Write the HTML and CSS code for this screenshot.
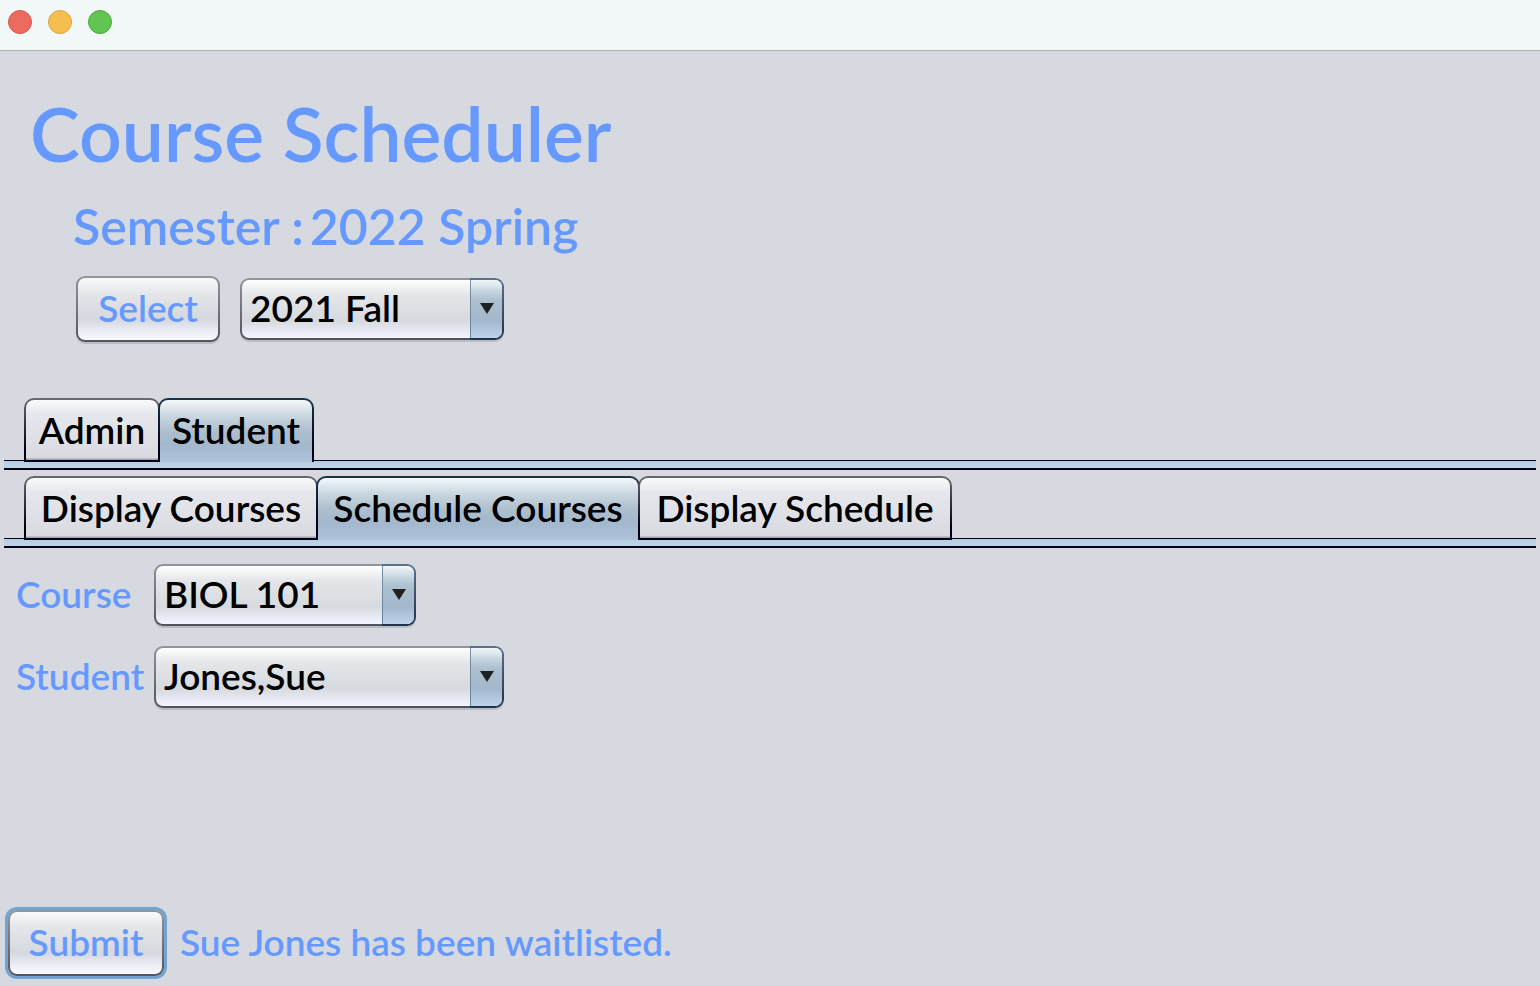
FILE: index.html
```html
<!DOCTYPE html>
<html lang="en">
<head>
<meta charset="utf-8">
<title>Course Scheduler</title>
<link rel="stylesheet" href="styles.css">
</head>
<body>
<div class="window">
  <header class="titlebar">
    <button class="light light-close" type="button" aria-label="Close"></button>
    <button class="light light-minimize" type="button" aria-label="Minimize"></button>
    <button class="light light-zoom" type="button" aria-label="Zoom"></button>
  </header>
  <section class="heading">
    <h1 class="title">Course Scheduler</h1>
    <h2 class="semester"><span>Semester :</span><span>2022 Spring</span></h2>
    <div class="semester-picker">
      <button class="button button-select" type="button">Select</button>
      <div class="combo combo-semester">
        <select class="combo-field" aria-label="Semester"><option>2021 Fall</option></select>
        <svg class="combo-arrow" width="14" height="11" viewBox="0 0 14 11" aria-hidden="true"><path d="M0 0H14L7 11Z" fill="#1e2022"/></svg>
      </div>
    </div>
  </section>
  <main class="content">
    <nav class="tabs" role="tablist" aria-label="Role">
      <button class="tab tab-admin" type="button" role="tab" aria-selected="false">Admin</button>
      <button class="tab tab-student" type="button" role="tab" aria-selected="true">Student</button>
    </nav>
    <div class="band"></div>
    <nav class="tabs tabs-inner" role="tablist" aria-label="Student pages">
      <button class="tab tab-courses" type="button" role="tab" aria-selected="false">Display Courses</button>
      <button class="tab tab-schedule" type="button" role="tab" aria-selected="true">Schedule Courses</button>
      <button class="tab tab-display" type="button" role="tab" aria-selected="false">Display Schedule</button>
    </nav>
    <div class="band"></div>
    <form class="form">
      <div class="fields">
        <label class="label" for="course">Course</label>
        <div class="combo combo-course">
          <select class="combo-field" id="course"><option>BIOL 101</option></select>
          <svg class="combo-arrow" width="14" height="11" viewBox="0 0 14 11" aria-hidden="true"><path d="M0 0H14L7 11Z" fill="#1e2022"/></svg>
        </div>
        <label class="label" for="student">Student</label>
        <div class="combo combo-student">
          <select class="combo-field" id="student"><option>Jones,Sue</option></select>
          <svg class="combo-arrow" width="14" height="11" viewBox="0 0 14 11" aria-hidden="true"><path d="M0 0H14L7 11Z" fill="#1e2022"/></svg>
        </div>
      </div>
      <div class="actions">
        <button class="button button-submit" type="button">Submit</button>
        <output class="status">Sue Jones has been waitlisted.</output>
      </div>
    </form>
  </main>
</div>
</body>
</html>
```

FILE: styles.css
```css
* {
  box-sizing: border-box;
}

body {
  margin: 0;
  background: #d6d9e0;
  color: #000;
  font: 600 37px/44px Futura, Lato, "Liberation Sans", sans-serif;
}

button,
select {
  margin: 0;
  font: inherit;
}

.window {
  display: flex;
  flex-direction: column;
  min-height: 100vh;
}

.titlebar {
  display: flex;
  gap: 16px;
  height: 51px;
  padding: 10px 8px;
  border-bottom: 1px solid #adafb8;
  background: #f3f9f9;
}

.light {
  width: 24px;
  height: 24px;
  padding: 0;
  border: 1px solid;
  border-radius: 50%;
}

.light-close {
  border-color: #d9564b;
  background: #ec6a5e;
}

.light-minimize {
  border-color: #d9a241;
  background: #f4bf4f;
}

.light-zoom {
  border-color: #4aa73c;
  background: #61c554;
}

.heading {
  padding: 37px 30px 0;
  color: #69f;
}

.title {
  margin: 0;
  font-size: 75px;
  font-weight: 600;
  line-height: 90px;
}

.semester {
  display: flex;
  gap: 6px;
  margin: 18px 0 0;
  padding-left: 43px;
  font-size: 50px;
  font-weight: 600;
  line-height: 60px;
}

.semester-picker {
  display: flex;
  align-items: center;
  gap: 20px;
  padding: 20px 0 0 46px;
}

.button {
  height: 66px;
  padding: 0 0 2px;
  border: 2px solid transparent;
  border-radius: 9px;
  background:
    linear-gradient(#f8fafa, #e5e6e9 25%, #d6d9df 62%, #d6d9df 68%, #e7eaf3 82%, #fafbff) padding-box,
    linear-gradient(#92969b, #52555d) border-box;
  box-shadow: 0 2px 0 #b9bcc3;
  color: #69f;
}

.button-select {
  width: 144px;
}

.button-submit {
  width: 156px;
  box-shadow: 0 0 0 3px #73a4d1;
}

.combo {
  position: relative;
}

.combo-semester {
  width: 264px;
}

.combo-course {
  width: 262px;
}

.combo-student {
  width: 350px;
}

.combo-field {
  appearance: none;
  display: block;
  width: 100%;
  height: 62px;
  padding: 0 40px 2px 8px;
  border: 2px solid transparent;
  border-radius: 9px;
  background:
    linear-gradient(#7890a5, #65839e) right 31px top / 1px 100% no-repeat padding-box,
    linear-gradient(#f3f7fa, #c4d4de 20%, #aec0cf 35%, #a3b8cc 70%, #bdd3ea) right top / 32px 100% no-repeat padding-box,
    linear-gradient(#fff, #e5e6e9 25%, #d6d9df 70%, #f3f5ff) padding-box,
    linear-gradient(#5b7289, #1d3249) right top / 34px 100% no-repeat border-box,
    linear-gradient(#92949d, #50535d) border-box;
  box-shadow: 0 2px 0 #b9bcc3;
  color: #000;
}

.combo-arrow {
  position: absolute;
  top: 25px;
  right: 10px;
  pointer-events: none;
}

.content {
  display: flex;
  flex: 1;
  flex-direction: column;
  padding-top: 56px;
}

.tabs {
  position: relative;
  z-index: 1;
  display: flex;
  margin-bottom: -2px;
  padding-left: 24px;
}

.tabs-inner {
  margin-top: 6px;
}

.tab {
  height: 64px;
  padding: 0;
  border: 2px solid transparent;
  border-radius: 10px 10px 0 0;
  background:
    linear-gradient(#fafbfc, #e7e8ed 22%, #d8dae1 97%, #a1a3ad 98%) padding-box,
    linear-gradient(#686a72, #000014 80%) border-box;
  color: #000;
}

.tab + .tab {
  margin-left: -2px;
}

.tab[aria-selected="true"] {
  padding-bottom: 2px;
  border-bottom: 0;
  background:
    linear-gradient(#f5f8fa, #cbd8e1 24%, #aebfce 50%, #a3b8cd 72%, #adc3da) padding-box,
    linear-gradient(#1e3448, #000014 80%) border-box;
}

.tab-admin {
  width: 136px;
}

.tab-student {
  width: 156px;
}

.tab-courses {
  width: 294px;
}

.tab-schedule {
  width: 324px;
}

.tab-display {
  width: 314px;
}

.band {
  height: 10px;
  margin: 0 4px;
  border-top: 1px solid #000014;
  border-bottom: 2px solid #000014;
  background: linear-gradient(#b8cce3, #bdd6e8);
}

.form {
  display: flex;
  flex: 1;
  flex-direction: column;
  justify-content: space-between;
  padding: 16px 8px 10px;
}

.fields {
  display: grid;
  grid-template-columns: 138px 1fr;
  align-items: center;
  gap: 20px 8px;
}

.label {
  padding: 0 0 2px 8px;
  color: #69f;
}

.actions {
  display: flex;
  align-items: center;
  gap: 16px;
}

.status {
  padding-bottom: 2px;
  color: #69f;
}
```
